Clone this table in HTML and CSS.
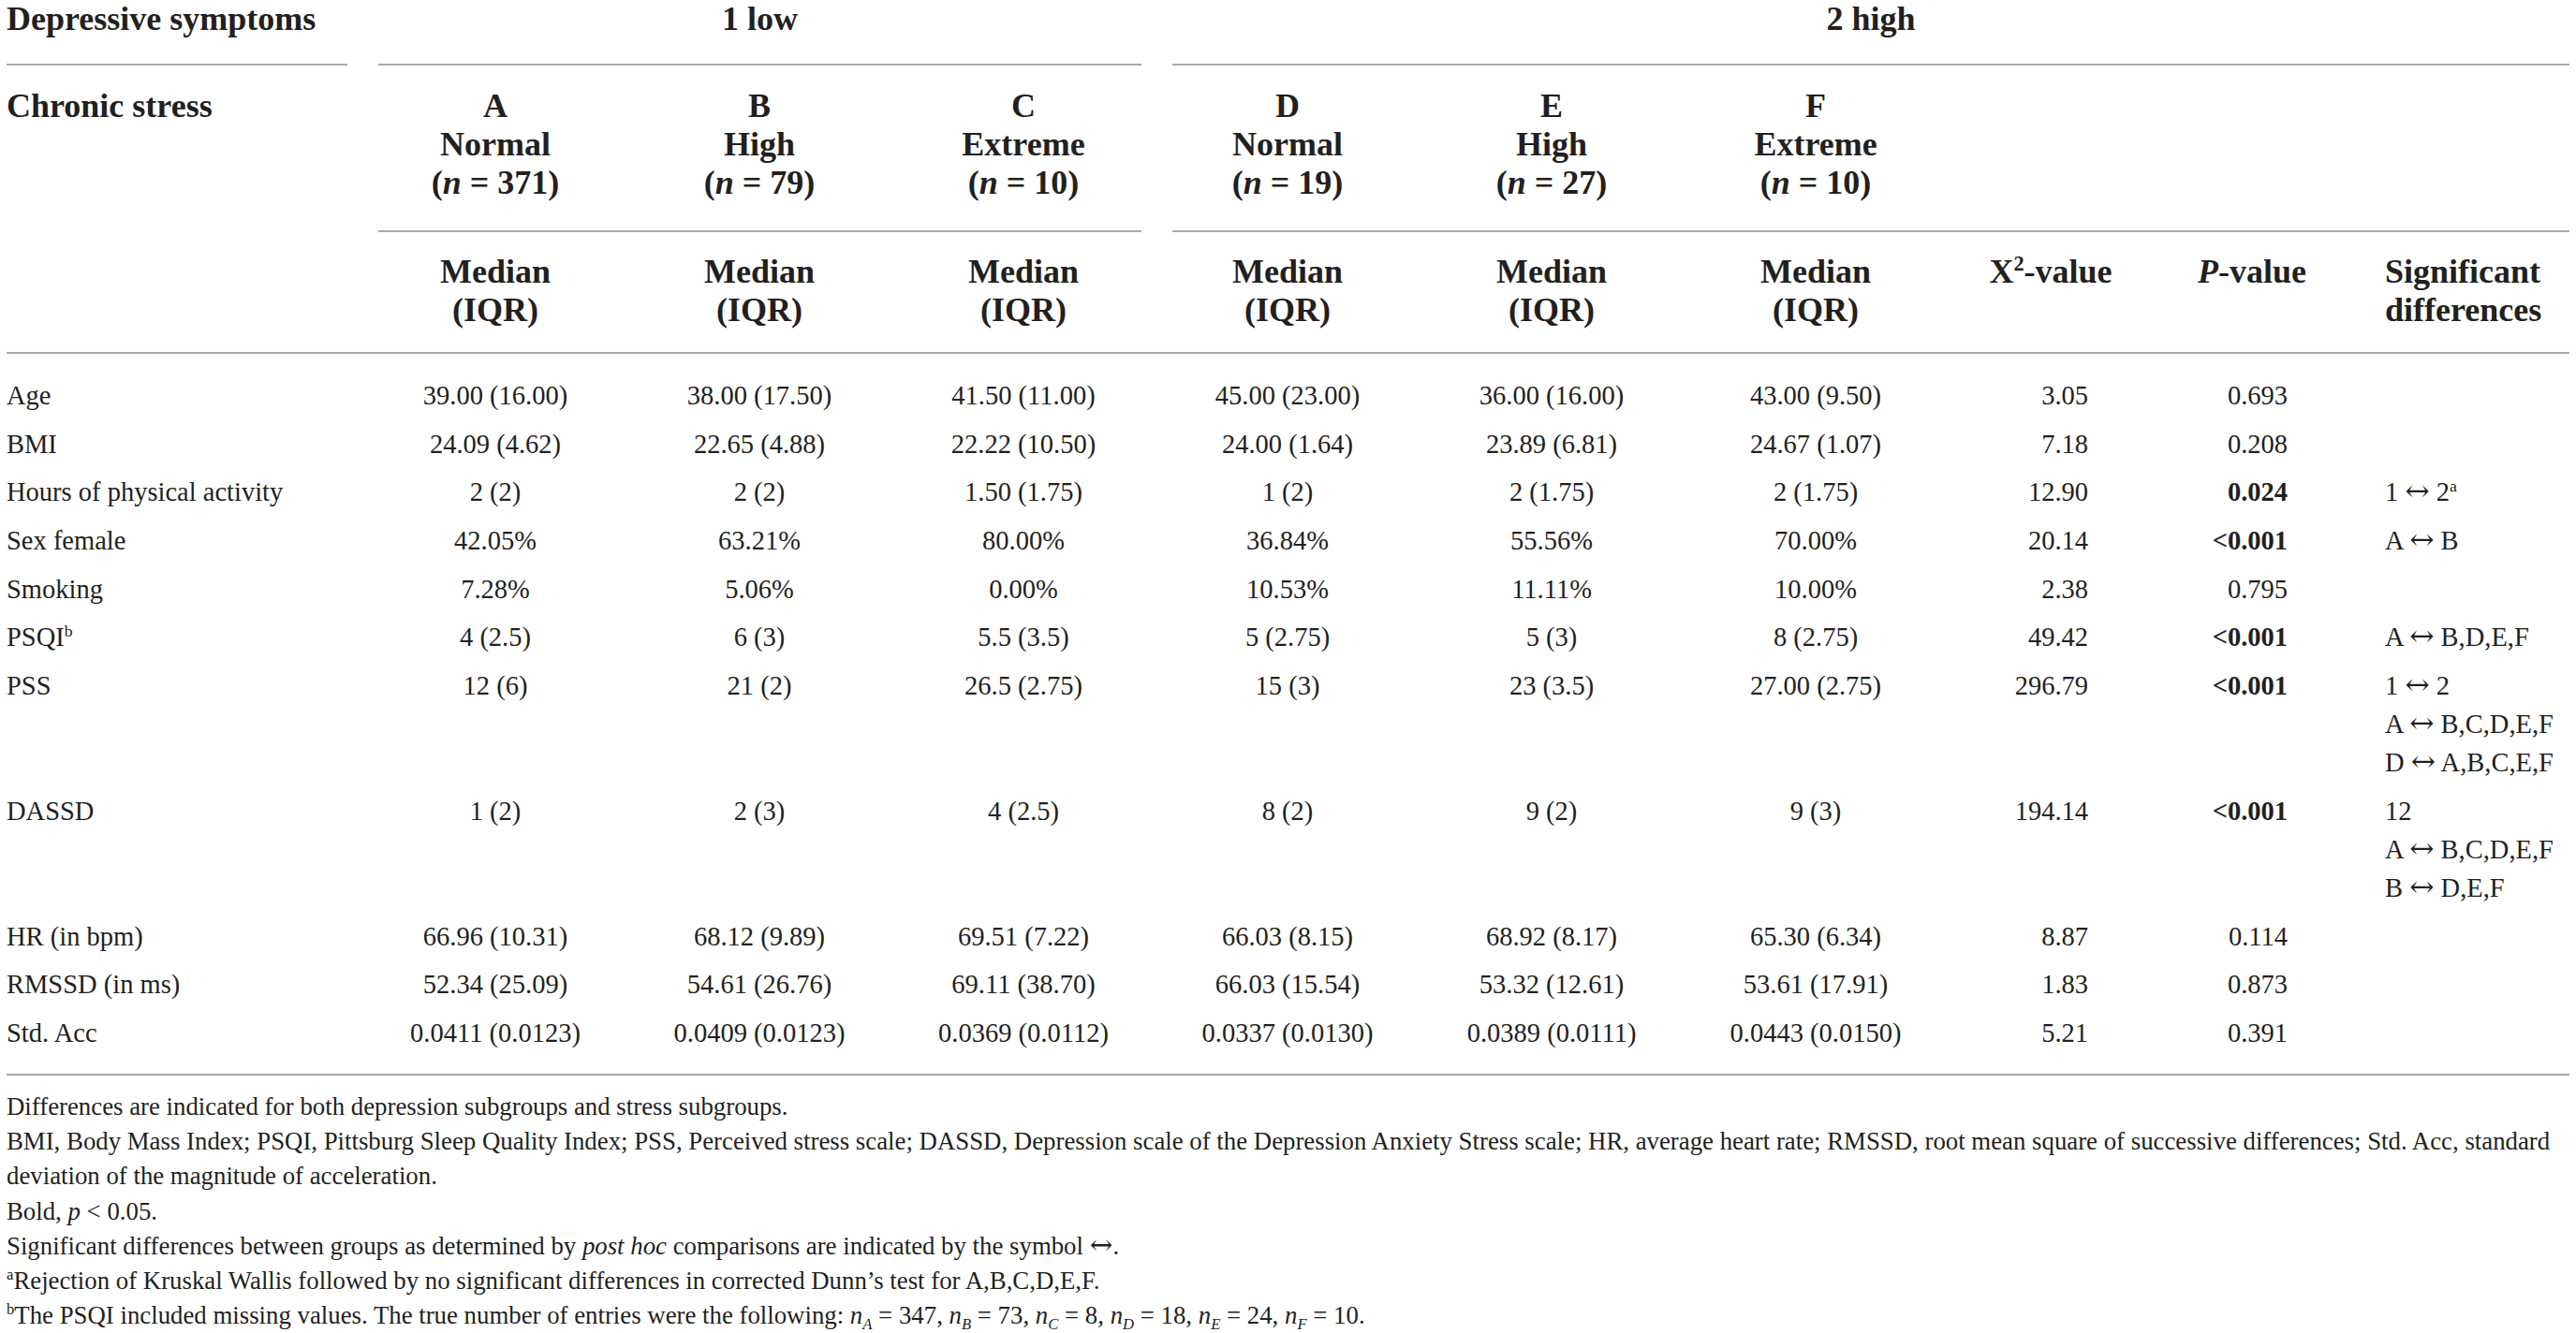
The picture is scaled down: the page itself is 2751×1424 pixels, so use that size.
FILE: index.html
```html
<!DOCTYPE html>
<html lang="en">

<head>
    <meta charset="UTF-8">
    <meta name="viewport" content="width=device-width, initial-scale=1.0">
    <title>Depressive symptoms and chronic stress</title>
    <link rel="stylesheet" href="styles.css">
</head>

<body>
    <div class="page">
        <table class="data-table">
            <colgroup>
                <col class="col-label">
                <col class="col-group">
                <col class="col-group">
                <col class="col-group">
                <col class="col-group">
                <col class="col-group">
                <col class="col-group">
                <col class="col-chi">
                <col class="col-p">
                <col class="col-sig">
            </colgroup>

            <thead>
                <!-- Depression groups -->
                <tr class="group-row">
                    <th class="label span-label">Depressive symptoms</th>
                    <th colspan="3" class="span-low">1 low</th>
                    <th colspan="7" class="span-high">2 high</th>
                </tr>
                <tr class="rule-row">
                    <td class="span-label"><div class="rule"></div></td>
                    <td colspan="3" class="span-low"><div class="rule"></div></td>
                    <td colspan="7" class="span-high"><div class="rule"></div></td>
                </tr>

                <!-- Stress subgroups -->
                <tr class="stress-row">
                    <th class="label">Chronic stress</th>
                    <th>A<br>Normal<br>(<i>n</i> = 371)</th>
                    <th>B<br>High<br>(<i>n</i> = 79)</th>
                    <th>C<br>Extreme<br>(<i>n</i> = 10)</th>
                    <th>D<br>Normal<br>(<i>n</i> = 19)</th>
                    <th>E<br>High<br>(<i>n</i> = 27)</th>
                    <th>F<br>Extreme<br>(<i>n</i> = 10)</th>
                    <th></th>
                    <th></th>
                    <th></th>
                </tr>
                <tr class="rule-row">
                    <td></td>
                    <td colspan="3" class="span-low"><div class="rule"></div></td>
                    <td colspan="7" class="span-high"><div class="rule"></div></td>
                </tr>

                <!-- Statistic names -->
                <tr class="stat-row">
                    <th></th>
                    <th>Median<br>(IQR)</th>
                    <th>Median<br>(IQR)</th>
                    <th>Median<br>(IQR)</th>
                    <th>Median<br>(IQR)</th>
                    <th>Median<br>(IQR)</th>
                    <th>Median<br>(IQR)</th>
                    <th class="chi">X<sup>2</sup>-value</th>
                    <th class="pval"><i>P</i>-value</th>
                    <th class="sig">Significant differences</th>
                </tr>
                <tr class="rule-row">
                    <td colspan="10"><div class="rule"></div></td>
                </tr>
            </thead>

            <tbody>
                <tr>
                    <td class="label">Age</td>
                    <td>39.00 (16.00)</td>
                    <td>38.00 (17.50)</td>
                    <td>41.50 (11.00)</td>
                    <td>45.00 (23.00)</td>
                    <td>36.00 (16.00)</td>
                    <td>43.00 (9.50)</td>
                    <td class="chi">3.05</td>
                    <td class="pval">0.693</td>
                    <td class="sig"></td>
                </tr>
                <tr>
                    <td class="label">BMI</td>
                    <td>24.09 (4.62)</td>
                    <td>22.65 (4.88)</td>
                    <td>22.22 (10.50)</td>
                    <td>24.00 (1.64)</td>
                    <td>23.89 (6.81)</td>
                    <td>24.67 (1.07)</td>
                    <td class="chi">7.18</td>
                    <td class="pval">0.208</td>
                    <td class="sig"></td>
                </tr>
                <tr>
                    <td class="label">Hours of physical activity</td>
                    <td>2 (2)</td>
                    <td>2 (2)</td>
                    <td>1.50 (1.75)</td>
                    <td>1 (2)</td>
                    <td>2 (1.75)</td>
                    <td>2 (1.75)</td>
                    <td class="chi">12.90</td>
                    <td class="pval"><b>0.024</b></td>
                    <td class="sig">1 <span class="arrow">&harr;</span> 2<sup>a</sup></td>
                </tr>
                <tr>
                    <td class="label">Sex female</td>
                    <td>42.05%</td>
                    <td>63.21%</td>
                    <td>80.00%</td>
                    <td>36.84%</td>
                    <td>55.56%</td>
                    <td>70.00%</td>
                    <td class="chi">20.14</td>
                    <td class="pval"><b>&lt;0.001</b></td>
                    <td class="sig">A <span class="arrow">&harr;</span> B</td>
                </tr>
                <tr>
                    <td class="label">Smoking</td>
                    <td>7.28%</td>
                    <td>5.06%</td>
                    <td>0.00%</td>
                    <td>10.53%</td>
                    <td>11.11%</td>
                    <td>10.00%</td>
                    <td class="chi">2.38</td>
                    <td class="pval">0.795</td>
                    <td class="sig"></td>
                </tr>
                <tr>
                    <td class="label">PSQI<sup>b</sup></td>
                    <td>4 (2.5)</td>
                    <td>6 (3)</td>
                    <td>5.5 (3.5)</td>
                    <td>5 (2.75)</td>
                    <td>5 (3)</td>
                    <td>8 (2.75)</td>
                    <td class="chi">49.42</td>
                    <td class="pval"><b>&lt;0.001</b></td>
                    <td class="sig">A <span class="arrow">&harr;</span> B,D,E,F</td>
                </tr>
                <tr>
                    <td class="label">PSS</td>
                    <td>12 (6)</td>
                    <td>21 (2)</td>
                    <td>26.5 (2.75)</td>
                    <td>15 (3)</td>
                    <td>23 (3.5)</td>
                    <td>27.00 (2.75)</td>
                    <td class="chi">296.79</td>
                    <td class="pval"><b>&lt;0.001</b></td>
                    <td class="sig">1 <span class="arrow">&harr;</span> 2<br>A <span class="arrow">&harr;</span> B,C,D,E,F<br>D <span class="arrow">&harr;</span> A,B,C,E,F</td>
                </tr>
                <tr>
                    <td class="label">DASSD</td>
                    <td>1 (2)</td>
                    <td>2 (3)</td>
                    <td>4 (2.5)</td>
                    <td>8 (2)</td>
                    <td>9 (2)</td>
                    <td>9 (3)</td>
                    <td class="chi">194.14</td>
                    <td class="pval"><b>&lt;0.001</b></td>
                    <td class="sig">12<br>A <span class="arrow">&harr;</span> B,C,D,E,F<br>B <span class="arrow">&harr;</span> D,E,F</td>
                </tr>
                <tr>
                    <td class="label">HR (in bpm)</td>
                    <td>66.96 (10.31)</td>
                    <td>68.12 (9.89)</td>
                    <td>69.51 (7.22)</td>
                    <td>66.03 (8.15)</td>
                    <td>68.92 (8.17)</td>
                    <td>65.30 (6.34)</td>
                    <td class="chi">8.87</td>
                    <td class="pval">0.114</td>
                    <td class="sig"></td>
                </tr>
                <tr>
                    <td class="label">RMSSD (in ms)</td>
                    <td>52.34 (25.09)</td>
                    <td>54.61 (26.76)</td>
                    <td>69.11 (38.70)</td>
                    <td>66.03 (15.54)</td>
                    <td>53.32 (12.61)</td>
                    <td>53.61 (17.91)</td>
                    <td class="chi">1.83</td>
                    <td class="pval">0.873</td>
                    <td class="sig"></td>
                </tr>
                <tr>
                    <td class="label">Std. Acc</td>
                    <td>0.0411 (0.0123)</td>
                    <td>0.0409 (0.0123)</td>
                    <td>0.0369 (0.0112)</td>
                    <td>0.0337 (0.0130)</td>
                    <td>0.0389 (0.0111)</td>
                    <td>0.0443 (0.0150)</td>
                    <td class="chi">5.21</td>
                    <td class="pval">0.391</td>
                    <td class="sig"></td>
                </tr>
            </tbody>
        </table>

        <!-- Table footnotes -->
        <div class="notes">
            <p>Differences are indicated for both depression subgroups and stress subgroups.</p>
            <p>BMI, Body Mass Index; PSQI, Pittsburg Sleep Quality Index; PSS, Perceived stress scale; DASSD, Depression scale of the Depression Anxiety Stress scale; HR, average heart rate; RMSSD, root mean square of successive differences; Std. Acc, standard deviation of the magnitude of acceleration.</p>
            <p>Bold, <i>p</i> &lt; 0.05.</p>
            <p>Significant differences between groups as determined by <i>post hoc</i> comparisons are indicated by the symbol <span class="arrow">&harr;</span>.</p>
            <p><sup>a</sup>Rejection of Kruskal Wallis followed by no significant differences in corrected Dunn&rsquo;s test for A,B,C,D,E,F.</p>
            <p><sup>b</sup>The PSQI included missing values. The true number of entries were the following: <i>n<sub>A</sub></i> = 347, <i>n<sub>B</sub></i> = 73, <i>n<sub>C</sub></i> = 8, <i>n<sub>D</sub></i> = 18, <i>n<sub>E</sub></i> = 24, <i>n<sub>F</sub></i> = 10.</p>
        </div>
    </div>
</body>

</html>
```

FILE: styles.css
```css
* {
    box-sizing: border-box;
    margin: 0;
    padding: 0;
}

body {
    font-family: "Liberation Serif", "Times New Roman", serif;
    background-color: #fff;
    color: #231f20;
}

.page {
    padding: 0 7px;
}

sup {
    font-size: 0.62em;
    line-height: 0;
    vertical-align: super;
}

sub {
    font-size: 0.62em;
    line-height: 0;
    vertical-align: sub;
}

.arrow {
    font-family: "DejaVu Serif", serif;
    font-size: 1.1em;
    line-height: 0;
}

/* Table layout */
.data-table {
    width: 2737px;
    table-layout: fixed;
    border-collapse: collapse;
}

.col-label {
    width: 381px;
}

.col-group {
    width: 282px;
}

.col-chi {
    width: 220px;
}

.col-p {
    width: 210px;
}

.col-sig {
    width: 234px;
}

/* Header */
.data-table th {
    font-size: 36px;
    line-height: 41px;
    font-weight: bold;
    text-align: center;
    vertical-align: top;
    white-space: nowrap;
}

.data-table th.label {
    text-align: left;
}

.group-row th {
    padding-bottom: 27px;
}

.stress-row th {
    padding-top: 23.4px;
    padding-bottom: 29.6px;
}

.stat-row th {
    padding-top: 22.4px;
    padding-bottom: 23.6px;
}

.stat-row th.sig {
    text-align: left;
    white-space: normal;
    padding-left: 37px;
}

.span-label {
    padding-right: 17px;
}

.span-low {
    padding-left: 16px;
    padding-right: 15px;
}

.span-high {
    padding-left: 18px;
}

.rule-row td {
    font-size: 0;
    line-height: 0;
}

.rule {
    height: 2px;
    background-color: #a8a8a8;
}

/* Body */
.data-table td {
    font-size: 28.5px;
    line-height: 41px;
    text-align: center;
    vertical-align: top;
    white-space: nowrap;
}

tbody td {
    padding: 5.35px 0;
}

tbody tr:first-child td {
    padding-top: 24.05px;
}

tbody tr:last-child td {
    padding-bottom: 23px;
}

.data-table td.label {
    text-align: left;
}

.data-table td.chi {
    text-align: right;
    padding-right: 70px;
}

.data-table td.pval {
    text-align: right;
    padding-right: 67px;
}

.data-table td.sig {
    text-align: left;
    padding-left: 37px;
}

/* Footnotes */
.notes {
    border-top: 2px solid #a8a8a8;
    padding-top: 15px;
    font-size: 26.8px;
    line-height: 37.2px;
}
```
